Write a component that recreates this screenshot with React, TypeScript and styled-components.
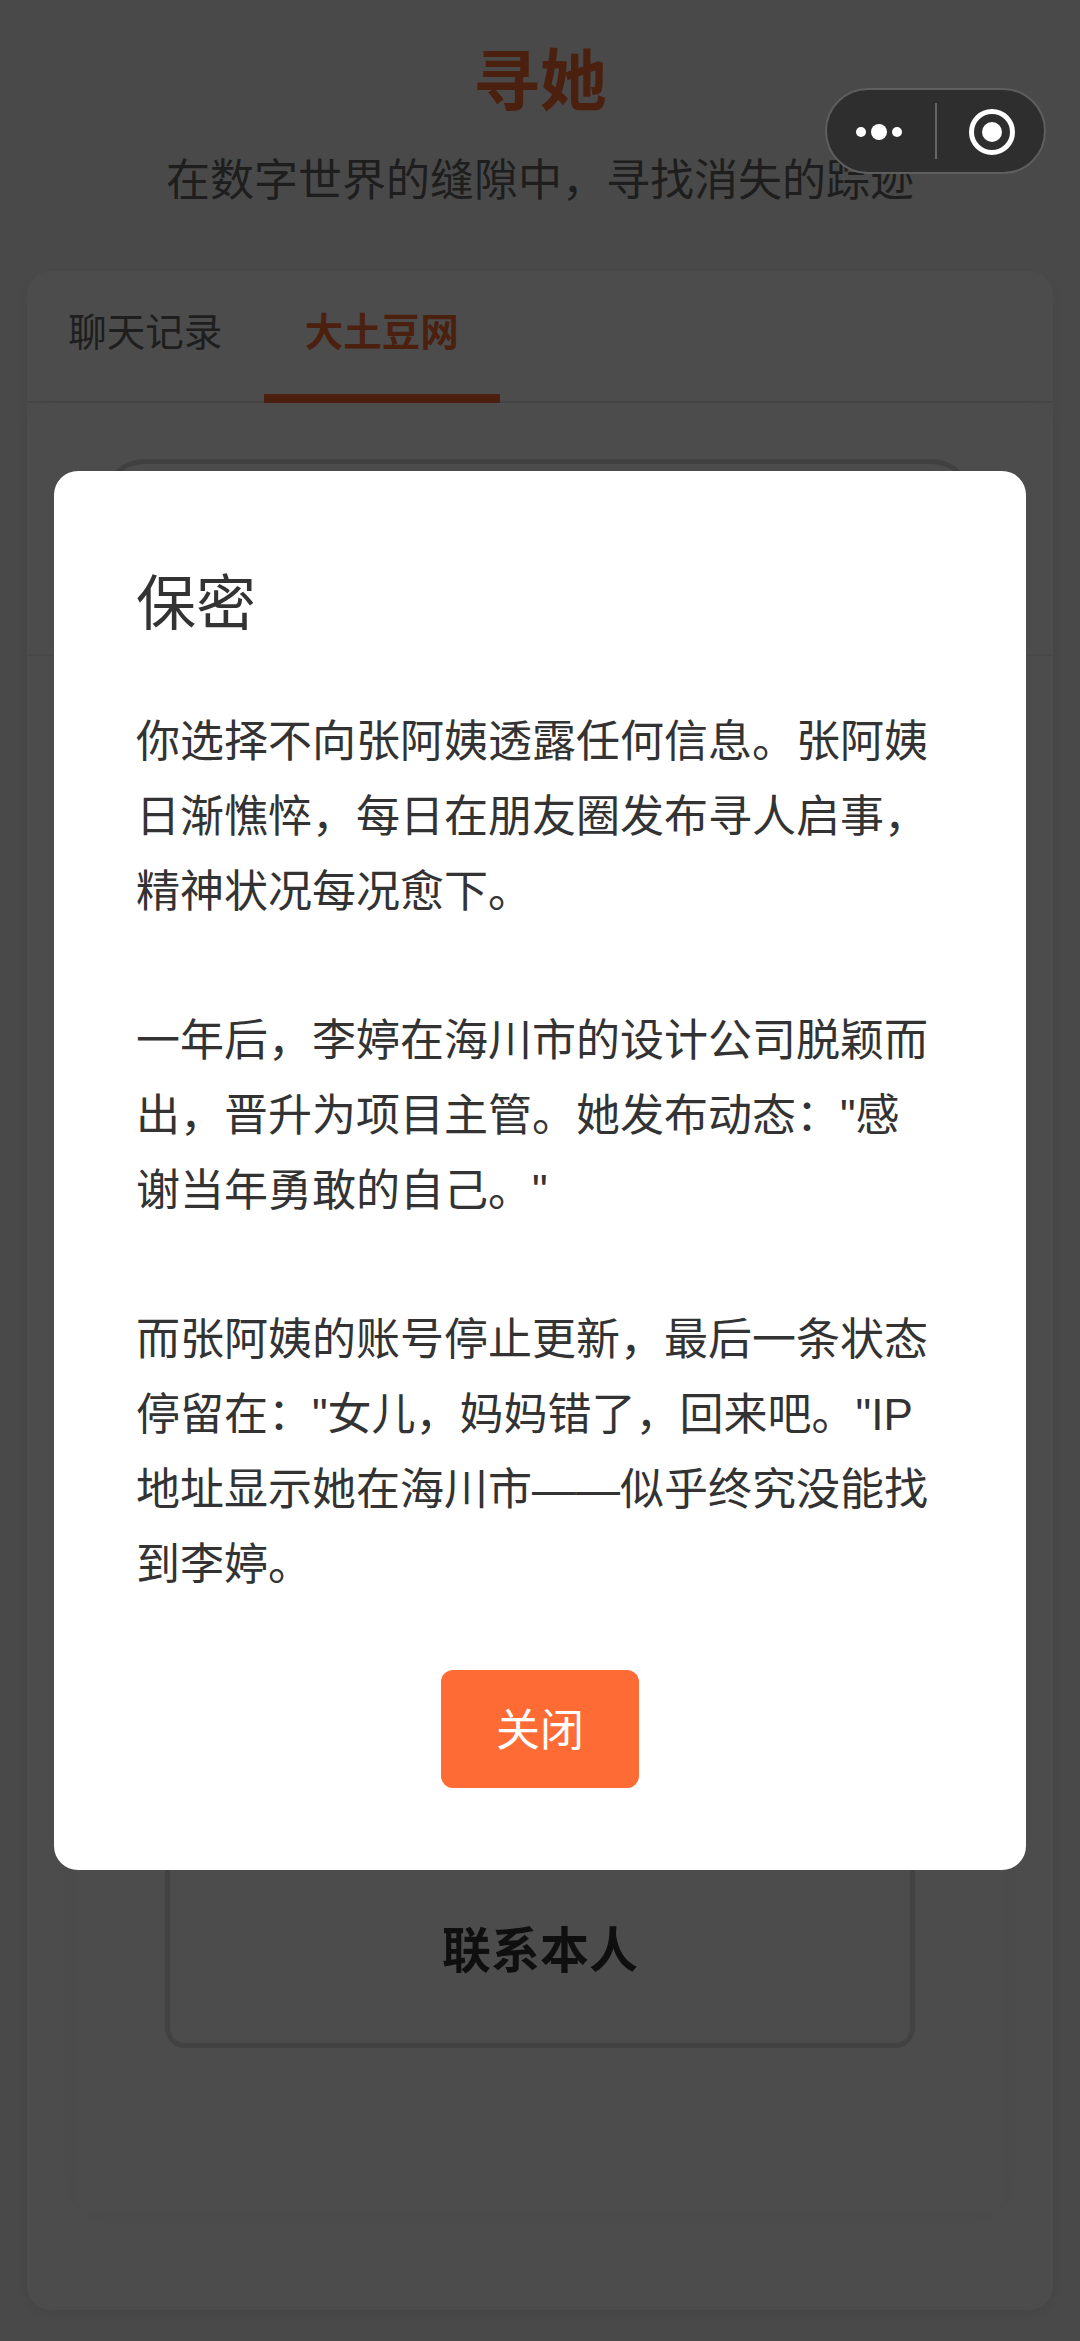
import React from 'react'
import styled, { createGlobalStyle } from 'styled-components'

const GlobalStyle = createGlobalStyle`
  html, body { margin: 0; padding: 0; height: 2341px; overflow: hidden; background: #f5f5f5; }
  body { font-family: "Liberation Sans", "Noto Sans CJK SC", sans-serif; color: #333; }
  * { box-sizing: border-box; }
`

const Page = styled.div`
  position: relative;
  height: 2341px;
  padding: 40px 27px 31px;
  display: flex;
  flex-direction: column;
`

const Header = styled.header`
  text-align: center;
  margin-bottom: 55px;
`
const Title = styled.h1`
  margin: 0 0 22px;
  font-size: 67px;
  line-height: 84px;
  font-weight: 700;
  color: #ff6b35;
`
const Subtitle = styled.p`
  margin: 0;
  font-size: 44px;
  line-height: 70px;
  color: #666;
`

const Card = styled.main`
  flex: 1;
  display: flex;
  flex-direction: column;
  background: #fff;
  border-radius: 24px;
  box-shadow: 0 4px 20px rgba(0, 0, 0, 0.05);
`
const Tabs = styled.nav`
  display: flex;
  height: 132px;
  border-bottom: 2px solid #e8e8e8;
`
const Tab = styled.div<{ $active?: boolean }>`
  width: 236.5px;
  height: 132px;
  padding-top: 32px;
  text-align: center;
  font-size: 38.5px;
  line-height: 60px;
  font-weight: ${p => (p.$active ? 700 : 400)};
  color: ${p => (p.$active ? '#ff6b35' : '#666')};
  border-bottom: 9px solid ${p => (p.$active ? '#ff6b35' : 'transparent')};
`
const Panel = styled.section`
  flex: 1;
  display: flex;
  flex-direction: column;
  border-radius: 24px;
  box-shadow: 0 0 12px rgba(0, 0, 0, 0.05);
`
const SearchSection = styled.div`
  height: 253px;
  padding: 56px 78px 0 74px;
  border-bottom: 2px solid #eee;
`
const SearchBox = styled.div`
  height: 140px;
  border: 5px solid #d8d8d8;
  border-radius: 44px;
`
const ResultSection = styled.div`
  flex: 1;
  padding: 48px 48px 100px;
  display: flex;
`
const ResultCard = styled.div`
  flex: 1;
  display: flex;
  justify-content: center;
  align-items: flex-end;
  padding: 0 90px 162px;
  border-radius: 20px;
  box-shadow: 0 4px 40px rgba(0, 0, 0, 0.04);
`
const ContactButton = styled.div`
  width: 100%;
  height: 198px;
  padding-bottom: 6px;
  display: flex;
  align-items: center;
  justify-content: center;
  border: 5px solid #dcdcdc;
  border-radius: 20px;
  font-size: 49px;
  font-weight: 700;
  color: #333;
`

const Scrim = styled.div`
  position: absolute;
  inset: 0;
  background: rgba(0, 0, 0, 0.7);
  display: flex;
  justify-content: center;
  padding-top: 471px;
`
const Modal = styled.div`
  width: 972px;
  height: 1399px;
  padding: 80px 84px 80px 82px;
  background: #fff;
  border-radius: 24px;
  display: flex;
  flex-direction: column;
`
const ModalTitle = styled.h2`
  margin: 0 0 46px;
  font-size: 60px;
  line-height: 108px;
  font-weight: 400;
  color: #333;
`
const ModalText = styled.p`
  margin: 0;
  font-size: 44px;
  line-height: 74.8px;
  color: #333;
  white-space: pre-wrap;
`
const CloseButton = styled.button`
  align-self: center;
  margin: 67px 0 0 2px;
  width: 198px;
  height: 118px;
  padding: 0 0 3px;
  border: none;
  border-radius: 12px;
  background: #ff6b35;
  color: #fff;
  font-family: inherit;
  font-size: 44px;
`

const Capsule = styled.div`
  position: absolute;
  top: 88px;
  left: 825px;
  width: 221px;
  height: 86px;
  color: #fff;
  background: #2e2e2e;
  border: 2px solid #5e5e5e;
  border-radius: 43px;
`
const CapsuleIcons = () => (
  <svg width="217" height="82" viewBox="0 0 217 82" fill="none">
    <circle cx="34" cy="42" r="5" fill="currentColor" />
    <circle cx="52" cy="42" r="8" fill="currentColor" />
    <circle cx="70" cy="42" r="5" fill="currentColor" />
    <rect x="108" y="13" width="2" height="56" fill="#666" />
    <circle cx="165" cy="42" r="20.5" stroke="currentColor" strokeWidth="5" />
    <circle cx="165" cy="42" r="10" fill="currentColor" />
  </svg>
)

const story = `你选择不向张阿姨透露任何信息。张阿姨日渐憔悴，每日在朋友圈发布寻人启事，精神状况每况愈下。

一年后，李婷在海川市的设计公司脱颖而出，晋升为项目主管。她发布动态："感谢当年勇敢的自己。"

而张阿姨的账号停止更新，最后一条状态停留在："女儿，妈妈错了，回来吧。"IP地址显示她在海川市——似乎终究没能找到李婷。`

export default function App() {
  return (
    <Page>
      <GlobalStyle />
      <Header>
        <Title>寻她</Title>
        <Subtitle>在数字世界的缝隙中，寻找消失的踪迹</Subtitle>
      </Header>
      <Card>
        <Tabs>
          <Tab>聊天记录</Tab>
          <Tab $active>大土豆网</Tab>
        </Tabs>
        <Panel>
          <SearchSection>
            <SearchBox />
          </SearchSection>
          <ResultSection>
            <ResultCard>
              <ContactButton>联系本人</ContactButton>
            </ResultCard>
          </ResultSection>
        </Panel>
      </Card>
      <Scrim>
        <Modal>
          <ModalTitle>保密</ModalTitle>
          <ModalText>{story}</ModalText>
          <CloseButton>关闭</CloseButton>
        </Modal>
      </Scrim>
      <Capsule>
        <CapsuleIcons />
      </Capsule>
    </Page>
  )
}
